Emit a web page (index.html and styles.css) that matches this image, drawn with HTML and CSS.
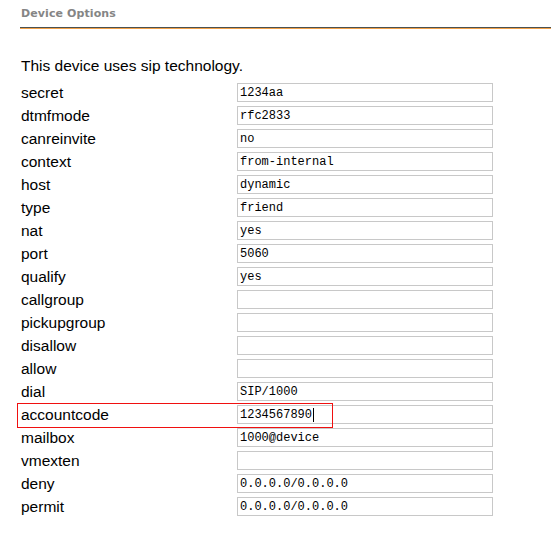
FILE: index.html
```html
<!DOCTYPE html>
<html>
<head>
<meta charset="utf-8">
<link rel="stylesheet" href="styles.css">
</head>
<body>
<div class="page">
  <div class="header"><h2>Device Options</h2></div>
  <p class="intro">This device uses sip technology.</p>
  <div class="rows">
    <div class="row"><span class="label">secret</span><div class="field">1234aa</div></div>
    <div class="row"><span class="label">dtmfmode</span><div class="field">rfc2833</div></div>
    <div class="row"><span class="label">canreinvite</span><div class="field">no</div></div>
    <div class="row"><span class="label">context</span><div class="field">from-internal</div></div>
    <div class="row"><span class="label">host</span><div class="field">dynamic</div></div>
    <div class="row"><span class="label">type</span><div class="field">friend</div></div>
    <div class="row"><span class="label">nat</span><div class="field">yes</div></div>
    <div class="row"><span class="label">port</span><div class="field">5060</div></div>
    <div class="row"><span class="label">qualify</span><div class="field">yes</div></div>
    <div class="row"><span class="label">callgroup</span><div class="field"></div></div>
    <div class="row"><span class="label">pickupgroup</span><div class="field"></div></div>
    <div class="row"><span class="label">disallow</span><div class="field"></div></div>
    <div class="row"><span class="label">allow</span><div class="field"></div></div>
    <div class="row"><span class="label">dial</span><div class="field">SIP/1000</div></div>
    <div class="row highlight"><span class="label">accountcode</span><div class="field">1234567890<span class="caret"></span></div></div>
    <div class="row"><span class="label">mailbox</span><div class="field">1000@device</div></div>
    <div class="row"><span class="label">vmexten</span><div class="field"></div></div>
    <div class="row"><span class="label">deny</span><div class="field">0.0.0.0/0.0.0.0</div></div>
    <div class="row"><span class="label">permit</span><div class="field">0.0.0.0/0.0.0.0</div></div>
  </div>
</div>
</body>
</html>
```

FILE: styles.css
```css
html, body {
  margin: 0;
  padding: 0;
  background: #fff;
}
body {
  font-family: "Liberation Sans", Arial, sans-serif;
  color: #000;
}
.page {
  width: 551px;
  height: 536px;
  box-sizing: border-box;
  padding-left: 20px;
}
.header {
  border-bottom: 1px solid #4a5252;
  box-shadow: 0 1px 0 #f0a04a;
}
.header h2 {
  margin: 0;
  height: 27px;
  padding-left: 1px;
  font-family: "DejaVu Sans", Verdana, sans-serif;
  font-size: 11px;
  font-weight: bold;
  letter-spacing: 0.1px;
  line-height: 27px;
  color: #858585;
}
.intro {
  margin: 29px 0 0 1px;
  font-size: 15.5px;
  line-height: 18px;
}
.rows {
  margin-top: 8px;
  padding-left: 1px;
  display: flex;
  flex-direction: column;
  gap: 4px;
}
.row {
  position: relative;
  display: grid;
  grid-template-columns: 216px 256px;
  align-items: center;
  height: 19px;
}
.label {
  font-size: 15.5px;
  line-height: 19px;
}
.field {
  box-sizing: border-box;
  height: 19px;
  border: 1px solid #c8c8c8;
  padding: 1px 0 0 2px;
  font-family: "Liberation Mono", "Courier New", monospace;
  font-size: 12px;
  line-height: 16px;
  white-space: nowrap;
  display: flex;
  align-items: center;
}
.caret {
  display: inline-block;
  width: 1px;
  height: 14px;
  background: #000;
  margin-left: 1px;
}
.highlight::after {
  content: "";
  position: absolute;
  left: -4px;
  top: -2px;
  width: 316px;
  height: 25px;
  box-sizing: border-box;
  border: 1px solid #f01010;
  pointer-events: none;
}
```
